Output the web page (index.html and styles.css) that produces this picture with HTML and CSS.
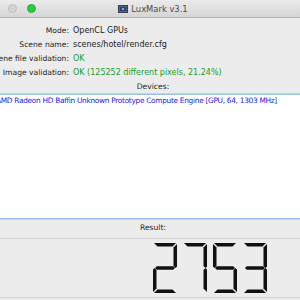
FILE: index.html
```html
<!DOCTYPE html>
<html lang="en">
<head>
    <meta charset="UTF-8">
    <title>LuxMark v3.1</title>
    <link rel="stylesheet" href="styles.css">
</head>
<body>
    <div class="window">
        <div class="titlebar">
            <div class="lights">
                <span class="light"></span>
                <span class="light"></span>
                <span class="light green"></span>
            </div>
            <div class="title">
                <svg class="app-icon" width="10" height="8" viewBox="0 0 10 8">
                    <rect x="0.5" y="0.5" width="9" height="7" fill="#5a6270" stroke="#3a3f48"/>
                    <rect x="2" y="2" width="6" height="4" fill="#2b3f8c"/>
                    <rect x="4" y="3" width="2" height="2" fill="#8fa6e6"/>
                </svg>
                <span>LuxMark v3.1</span>
            </div>
        </div>

        <div class="content">
            <div class="info">
                <span class="label">Mode:</span>
                <span class="value">OpenCL GPUs</span>
                <span class="label">Scene name:</span>
                <span class="value">scenes/hotel/render.cfg</span>
                <span class="label">Scene file validation:</span>
                <span class="value ok">OK</span>
                <span class="label">Image validation:</span>
                <span class="value ok">OK (125252 different pixels, 21.24%)</span>
            </div>

            <div class="section-label">Devices:</div>
            <div class="device-list">
                <div class="device">AMD Radeon HD Baffin Unknown Prototype Compute Engine [GPU, 64, 1303 MHz]</div>
            </div>

            <div class="section-label result">Result:</div>
            <div class="lcd">
                <!-- seven segment digits: 2 7 5 3 -->
                <svg class="digits" width="114" height="50" viewBox="0 0 114 50" role="img" aria-label="2753">
                    <defs>
                        <polygon id="sa" points="1,0 23,0 19.5,3.5 4.5,3.5"/>
                        <polygon id="sb" points="24,1 24,23.5 22.5,25 20.5,23 20.5,4.5"/>
                        <polygon id="sc" points="24,26.5 24,49 20.5,45.5 20.5,27 22.5,25"/>
                        <polygon id="sd" points="4.5,46.5 19.5,46.5 23,50 1,50"/>
                        <polygon id="se" points="0,26.5 1.5,25 3.5,27 3.5,45.5 0,49"/>
                        <polygon id="sf" points="0,1 3.5,4.5 3.5,23 1.5,25 0,23.5"/>
                        <polygon id="sg" points="2,25 3.8,23.3 20.2,23.3 22,25 20.2,26.7 3.8,26.7"/>
                    </defs>
                    <g>
                        <use href="#sa"/><use href="#sb"/><use href="#sg"/><use href="#se"/><use href="#sd"/>
                    </g>
                    <g transform="translate(30 0)">
                        <use href="#sa"/><use href="#sb"/><use href="#sc"/>
                    </g>
                    <g transform="translate(60 0)">
                        <use href="#sa"/><use href="#sf"/><use href="#sg"/><use href="#sc"/><use href="#sd"/>
                    </g>
                    <g transform="translate(90 0)">
                        <use href="#sa"/><use href="#sb"/><use href="#sg"/><use href="#sc"/><use href="#sd"/>
                    </g>
                </svg>
            </div>
        </div>
    </div>
</body>
</html>
```

FILE: styles.css
```css
body {
    margin: 0;
    background-color: #ececec;
    font-family: "DejaVu Sans", Verdana, sans-serif;
    font-size: 7.6px;
    color: #222;
    overflow: hidden;
}

.window {
    width: 326px;
    margin-left: -10px;
    background-color: #ececec;
}

.titlebar {
    height: 17px;
    display: flex;
    align-items: center;
    position: relative;
    background: linear-gradient(#ebebeb, #d5d5d5);
    border-bottom: 1px solid #b4b4b4;
}

.lights {
    display: flex;
    gap: 10px;
    margin-left: -1px;
}

.light {
    width: 9px;
    height: 9px;
    border-radius: 50%;
    background-color: #d4d4d4;
    border: 0.5px solid #bcbcbc;
    box-sizing: border-box;
}

.light.green {
    background-color: #2bc840;
    border-color: #25b035;
}

.title {
    position: absolute;
    left: 0;
    right: 0;
    top: 0;
    bottom: 0;
    display: flex;
    justify-content: center;
    align-items: center;
    gap: 3px;
    font-size: 8.4px;
    color: #4a4a4a;
}

.content {
    padding-top: 6px;
}

.info {
    display: grid;
    grid-template-columns: 79px 1fr;
    column-gap: 4px;
}

.label {
    display: flex;
    justify-content: flex-end;
    white-space: nowrap;
    height: 14px;
    line-height: 14px;
}

.value {
    white-space: nowrap;
    height: 14px;
    line-height: 14px;
    font-size: 8px;
}

.ok {
    color: #249b2a;
}

.section-label {
    text-align: center;
    height: 14px;
    line-height: 14px;
}

.section-label.result {
    margin-top: 2px;
}

.device-list {
    margin: 0 2px;
    height: 123px;
    background-color: #fff;
    border: 1px solid #9dc2ee;
    box-shadow: 0 0 0 1px #b8d3f3;
}

.device {
    color: #2323e6;
    white-space: nowrap;
    line-height: 12px;
    padding-left: 3px;
    font-size: 7.4px;
    letter-spacing: -0.3px;
}

.lcd {
    height: 58px;
    margin-top: 3px;
    border-top: 1px solid #cfcfcf;
    border-bottom: 1px solid #cfcfcf;
    display: flex;
    justify-content: flex-end;
    align-items: center;
    padding-right: 49px;
}

.digits {
    fill: #111;
}
```
